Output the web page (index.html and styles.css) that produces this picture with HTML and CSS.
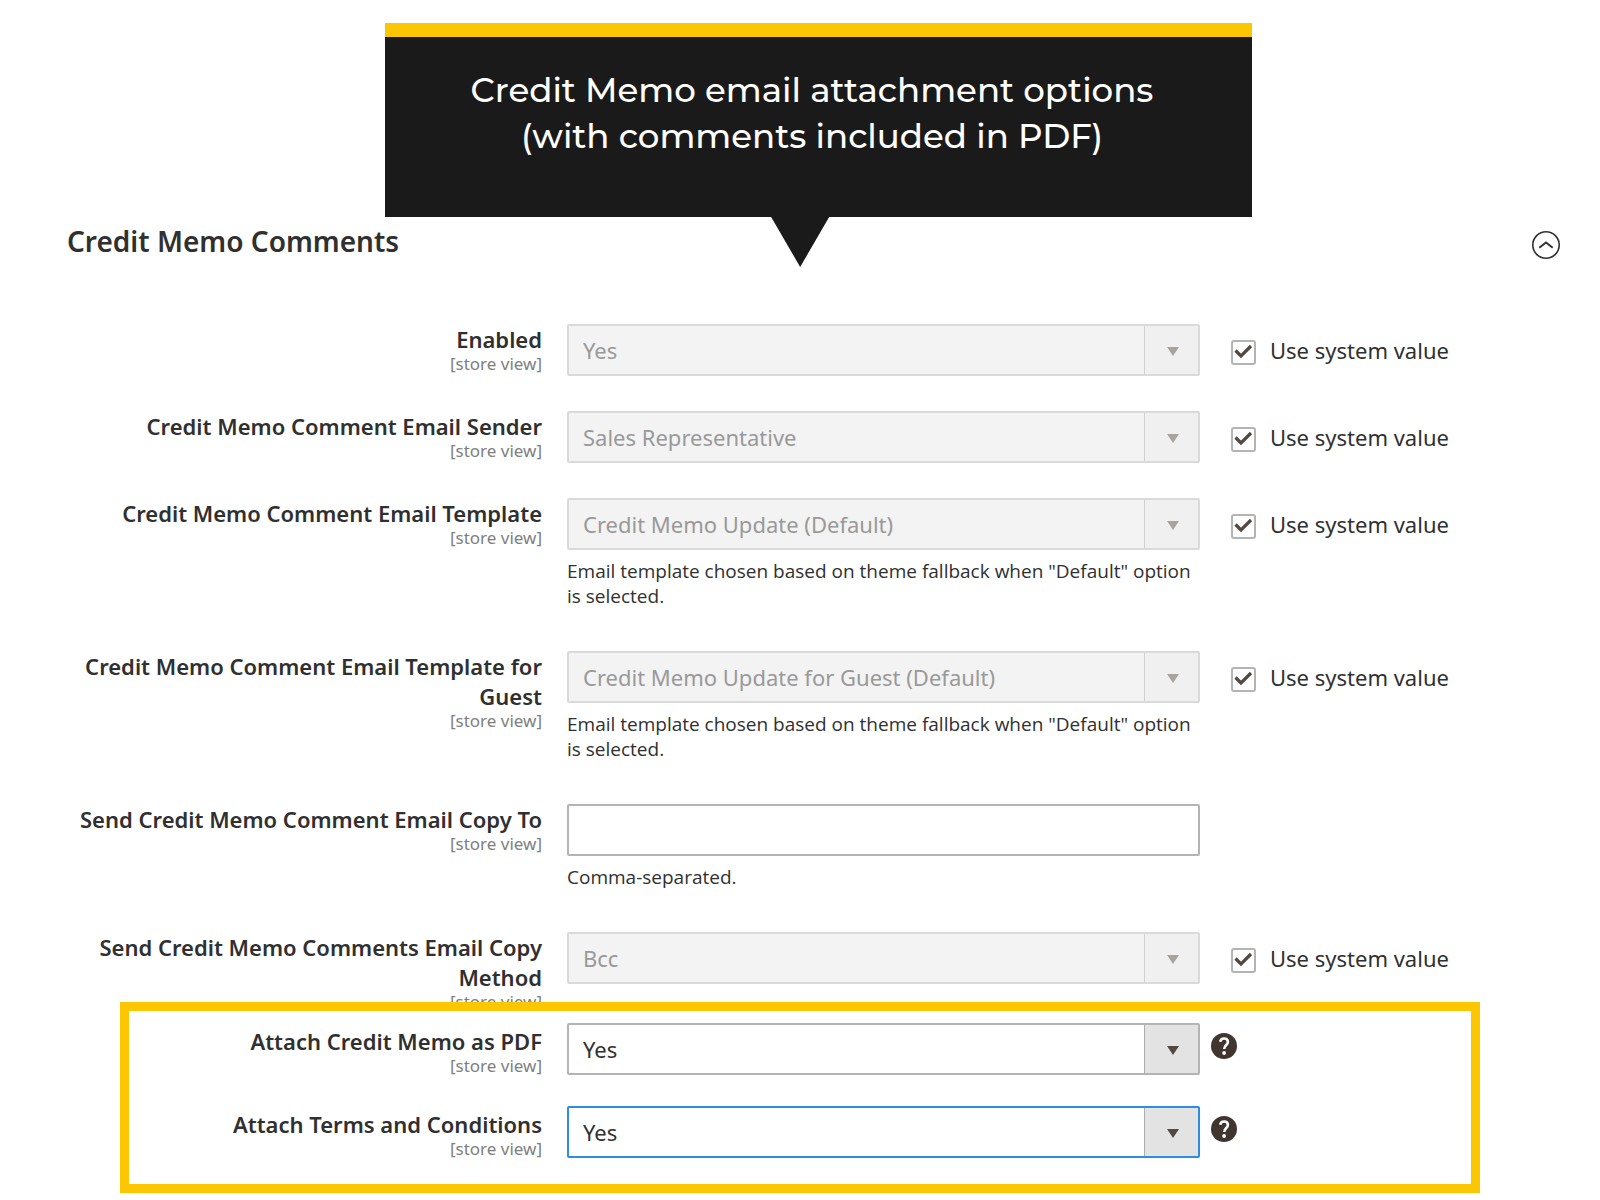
FILE: index.html
```html
<!DOCTYPE html>
<html lang="en">
<head>
<meta charset="utf-8">
<meta name="viewport" content="width=device-width, initial-scale=1">
<title>Credit Memo Comments</title>
<link rel="stylesheet" href="styles.css">
</head>
<body>
<svg class="sprite" aria-hidden="true">
  <symbol id="check" viewBox="0 0 25 25"><path d="M4.500 10.500L10 16L20 6" fill="none" stroke="currentColor" stroke-width="3.200"/></symbol>
  <symbol id="help" viewBox="0 0 26 26"><circle cx="13" cy="13" r="13" fill="#41362f"/><path d="M9.200 8.800C9.500 6.600 11 5.500 13.100 5.500C15.300 5.500 16.900 6.900 16.900 9C16.900 11.800 13.200 12.300 13.200 16" fill="none" stroke="#fff" stroke-width="2.600"/><circle cx="13.100" cy="20" r="1.900" fill="#fff"/></symbol>
</svg>

<header class="banner-row">
  <div class="banner">
    <p class="banner-text">Credit Memo email attachment options<br>(with comments included in PDF)</p>
  </div>
</header>

<main class="section">
  <div class="section-head">
    <h1 class="section-title">Credit Memo Comments</h1>
    <button class="toggle" type="button" aria-label="Collapse section" aria-expanded="true">
      <svg width="28" height="28" viewBox="0 0 28 28" fill="none" stroke="#303030" aria-hidden="true"><circle cx="14" cy="14" r="13.200" stroke-width="1.600"/><path d="M7.300 16.700L14 11.500L20.700 16.700" stroke-width="1.900"/></svg>
    </button>
  </div>

  <form class="form">
    <div class="row">
      <label class="label" for="enabled">Enabled<span class="scope">[store view]</span></label>
      <div class="field">
        <div class="select disabled"><select id="enabled" disabled><option>Yes</option></select></div>
      </div>
      <label class="inherit"><span class="check"><input type="checkbox" checked><svg class="tick"><use href="#check"/></svg></span>Use system value</label>
    </div>

    <div class="row">
      <label class="label" for="sender">Credit Memo Comment Email Sender<span class="scope">[store view]</span></label>
      <div class="field">
        <div class="select disabled"><select id="sender" disabled><option>Sales Representative</option></select></div>
      </div>
      <label class="inherit"><span class="check"><input type="checkbox" checked><svg class="tick"><use href="#check"/></svg></span>Use system value</label>
    </div>

    <div class="row">
      <label class="label" for="template">Credit Memo Comment Email Template<span class="scope">[store view]</span></label>
      <div class="field">
        <div class="select disabled"><select id="template" disabled><option>Credit Memo Update (Default)</option></select></div>
        <p class="note">Email template chosen based on theme fallback when "Default" option is selected.</p>
      </div>
      <label class="inherit"><span class="check"><input type="checkbox" checked><svg class="tick"><use href="#check"/></svg></span>Use system value</label>
    </div>

    <div class="row">
      <label class="label" for="guest">Credit Memo Comment Email Template for Guest<span class="scope">[store view]</span></label>
      <div class="field">
        <div class="select disabled"><select id="guest" disabled><option>Credit Memo Update for Guest (Default)</option></select></div>
        <p class="note">Email template chosen based on theme fallback when "Default" option is selected.</p>
      </div>
      <label class="inherit"><span class="check"><input type="checkbox" checked><svg class="tick"><use href="#check"/></svg></span>Use system value</label>
    </div>

    <div class="row">
      <label class="label" for="copy-to">Send Credit Memo Comment Email Copy To<span class="scope">[store view]</span></label>
      <div class="field">
        <input class="text" id="copy-to" type="text">
        <p class="note">Comma-separated.</p>
      </div>
    </div>

    <div class="row">
      <label class="label" for="method">Send Credit Memo Comments Email Copy Method<span class="scope">[store view]</span></label>
      <div class="field">
        <div class="select disabled"><select id="method" disabled><option>Bcc</option></select></div>
      </div>
      <label class="inherit"><span class="check"><input type="checkbox" checked><svg class="tick"><use href="#check"/></svg></span>Use system value</label>
    </div>

    <div class="highlight">
      <div class="row">
        <label class="label" for="attach-pdf">Attach Credit Memo as PDF<span class="scope">[store view]</span></label>
        <div class="field">
          <div class="select"><select id="attach-pdf"><option>Yes</option><option>No</option></select></div>
        </div>
        <div class="hint"><button class="help" type="button" aria-label="Help"><svg width="26" height="26"><use href="#help"/></svg></button></div>
      </div>
      <div class="row">
        <label class="label" for="attach-terms">Attach Terms and Conditions<span class="scope">[store view]</span></label>
        <div class="field">
          <div class="select active"><select id="attach-terms"><option>Yes</option><option>No</option></select></div>
        </div>
        <div class="hint"><button class="help" type="button" aria-label="Help"><svg width="26" height="26"><use href="#help"/></svg></button></div>
      </div>
    </div>
  </form>
</main>
</body>
</html>
```
FILE: styles.css
```css
* { box-sizing: border-box; }

body {
  margin: 0;
  background: #fff;
  color: #303030;
  font: 22px/30px "Noto Sans", "Open Sans", sans-serif;
}

p, h1 { margin: 0; }

button {
  padding: 0;
  border: 0;
  background: none;
  cursor: pointer;
}

button svg { display: block; }

.sprite {
  position: absolute;
  width: 0;
  height: 0;
}

/* Callout banner */
.banner-row {
  display: grid;
  grid-template-columns: 385fr 867fr 348fr;
  padding-top: 23px;
}

.banner {
  position: relative;
  grid-column: 2;
  padding: 30px 13px 58px 0;
  border-top: 14px solid #fcc600;
  background: #1a1a1a;
  color: #fff;
  text-align: center;
}

.banner::after {
  content: "";
  position: absolute;
  top: 100%;
  left: 48%;
  width: 58px;
  height: 50px;
  margin-left: -30px;
  background: #1a1a1a;
  clip-path: polygon(0 0, 100% 0, 50% 100%);
}

.banner-text {
  font: 530 34px/46px Montserrat, Inter, sans-serif;
}

/* Section heading */
.section { padding: 7px 40px 7px 67px; }

.section-head {
  display: flex;
  justify-content: space-between;
  align-items: flex-end;
  margin-bottom: 65px;
}

.section-title {
  font-size: 28px;
  line-height: 35px;
  font-weight: 560;
}

/* Settings rows */
.form,
.highlight {
  display: flex;
  flex-direction: column;
}

.form { gap: 35px; }

.row {
  display: grid;
  grid-template-columns: 500fr 633fr 360fr;
  align-items: start;
}

.label {
  padding-right: 25px;
  font-weight: 560;
  text-align: right;
}

.scope {
  display: block;
  color: #808080;
  font-size: 17px;
  line-height: 19px;
  font-weight: 400;
}

.select { position: relative; }

.select select,
.text {
  display: block;
  width: 100%;
  height: 52px;
  padding: 0 14px;
  border: 2px solid #b4b4b4;
  border-radius: 2px;
  outline: 0;
  background: #fff;
  color: #303030;
  font: inherit;
  appearance: none;
}

.select::after {
  content: "";
  position: absolute;
  inset: 2px 2px 2px auto;
  width: 53px;
  border-left: 1px solid #adadad;
  background: #e3e3e3;
  pointer-events: none;
}

.select::before {
  content: "";
  position: absolute;
  z-index: 1;
  top: 23px;
  right: 21px;
  width: 12px;
  height: 9px;
  background: #514943;
  clip-path: polygon(0 0, 100% 0, 50% 100%);
  pointer-events: none;
}

.disabled select {
  border-color: #dadada;
  background: #f3f3f3;
  color: #999;
  opacity: 1;
}

.disabled::after {
  border-color: #d0d0d0;
  background: #f0f0f0;
}

.disabled::before { background: #a7a39f; }

.active select { border-color: #2f8ddf; }

.note {
  padding: 9px 0 7px;
  font-family: "Open Sans", "Noto Sans", sans-serif;
  font-size: 19px;
  line-height: 25px;
}

.inherit {
  display: flex;
  align-items: center;
  gap: 14px;
  padding: 11px 0 0 31px;
}

.check {
  display: grid;
  padding-top: 4px;
}

.check input,
.tick {
  grid-area: 1 / 1;
  width: 25px;
  height: 25px;
  margin: 0;
}

.check input {
  border: 2px solid #b4b4b4;
  border-radius: 3px;
  background: #fff;
  appearance: none;
}

.tick {
  color: #514943;
  pointer-events: none;
  visibility: hidden;
}

.check input:checked + .tick { visibility: visible; }

/* Framed options */
.highlight {
  position: relative;
  gap: 31px;
  margin-top: -23px;
  padding-bottom: 35px;
}

.highlight::before {
  content: "";
  position: absolute;
  inset: -21px 80px 0 53px;
  border: 9px solid #fcc600;
  pointer-events: none;
}

.highlight .label { padding-top: 3px; }

.hint { padding: 10px 0 0 11px; }

.help { display: block; }
```
